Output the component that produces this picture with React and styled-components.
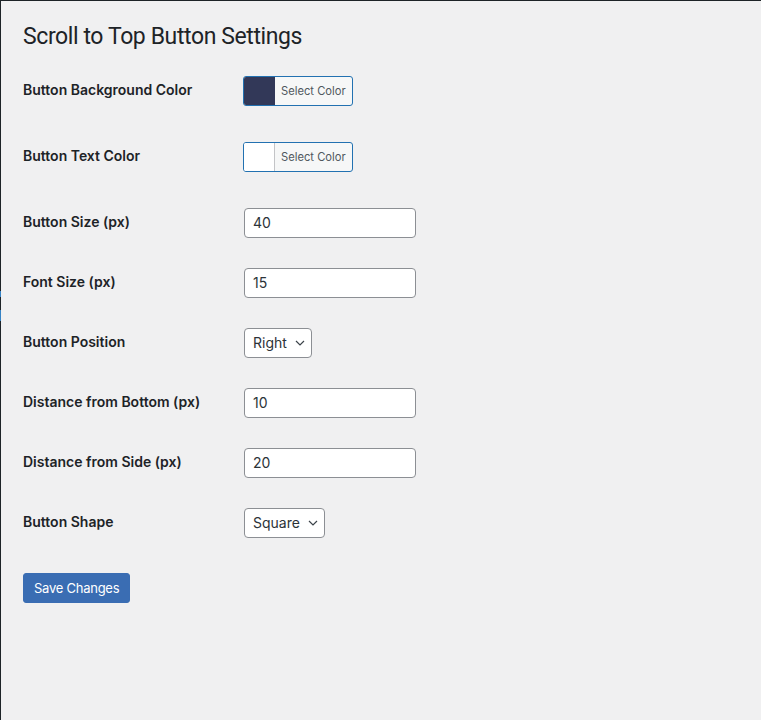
import styled, { createGlobalStyle } from "styled-components";

const GlobalStyle = createGlobalStyle`
  html, body {
    margin: 0;
    padding: 0;
    background: #f0f0f1;
  }
  body {
    font-family: Inter, "Noto Sans", "Liberation Sans", sans-serif;
    color: #1d2327;
  }
`

const Page = styled.div`
  display: flex;
  min-height: 720px;
  border-top: 1px solid #1d2327;
  box-sizing: border-box;
  background: #f0f0f1;
`

const EdgeStrip = styled.div`
  width: 1px;
  flex-shrink: 0;
  background: linear-gradient(
    to bottom,
    #1d2327 0px,
    #1d2327 290px,
    #3582c4 290px,
    #3582c4 296px,
    #1d2327 296px,
    #1d2327 309px,
    #3582c4 309px,
    #3582c4 320px,
    #1d2327 320px
  );
`

const Wrap = styled.div`
  flex: 1;
  padding: 0 20px 0 22px;
`

const Title = styled.h1`
  font-family: Roboto, Inter, sans-serif;
  font-size: 23px;
  font-weight: 400;
  line-height: 1.3;
  letter-spacing: -0.4px;
  margin: 0;
  padding: 21px 0 9px;
  color: #1d2327;
`

const FormTable = styled.div`
  display: flex;
  flex-direction: column;
`

const Row = styled.div`
  display: grid;
  grid-template-columns: 210px 1fr;
  height: ${props => props.tall ? 66 : 60}px;
`

const Label = styled.div`
  font-size: 14px;
  font-weight: 600;
  line-height: 1.3;
  padding-top: 20px;
  color: #1d2327;
`

const Field = styled.div`
  padding: 15px 10px;
  display: flex;
  align-items: flex-start;
`

const ColorResult = styled.button`
  display: flex;
  align-items: stretch;
  height: 30px;
  padding: 0;
  margin: 0;
  border: 1px solid #2271b1;
  border-radius: 3px;
  background: #f6f7f7;
  overflow: hidden;
  cursor: pointer;
  box-sizing: border-box;
`

const Swatch = styled.span`
  width: 30px;
  background: ${props => props.color};
  border-right: 1px solid ${props => props.color === "#ffffff" ? "#c3c4c7" : props.color};
`

const ColorText = styled.span`
  display: flex;
  align-items: center;
  padding: 0 6px;
  font-size: 11.2px;
  color: #50575e;
  font-family: Inter, sans-serif;
`

const TextInput = styled.input`
  width: 172px;
  height: 30px;
  margin: 0 1px;
  padding: 0 8px;
  box-sizing: border-box;
  border: 1px solid #8c8f94;
  border-radius: 4px;
  background: #fff;
  font-family: inherit;
  font-size: 14px;
  color: #2c3338;
  outline: none;
`

const SelectWrap = styled.div`
  position: relative;
  display: inline-flex;
  margin: 0 1px;

  & svg {
    position: absolute;
    right: 7px;
    top: 10px;
    pointer-events: none;
  }
`

const Select = styled.select`
  appearance: none;
  height: 30px;
  padding: 0 24px 0 8px;
  border: 1px solid #8c8f94;
  border-radius: 4px;
  background: #fff;
  font-family: inherit;
  font-size: 14px;
  color: #2c3338;
  outline: none;
`

const Submit = styled.div`
  padding-top: 20px;
`

const PrimaryButton = styled.button`
  height: 30px;
  padding: 0 10px;
  border: 1px solid #3a6db3;
  border-radius: 3px;
  background: #3a6db3;
  color: #fff;
  font-family: inherit;
  font-size: 13px;
  letter-spacing: -0.25px;
  cursor: pointer;
`

const Chevron = () => (
  <svg width="10" height="10" viewBox="0 0 10 10">
    <polyline points="1,3 5,7 9,3" fill="none" stroke="#3c434a" strokeWidth="1.2" />
  </svg>
)

const ColorPicker = ({ color }) => (
  <ColorResult type="button">
    <Swatch color={color} />
    <ColorText>Select Color</ColorText>
  </ColorResult>
)

const SelectField = ({ value, options }) => (
  <SelectWrap>
    <Select defaultValue={value}>
      {options.map(o => <option key={o}>{o}</option>)}
    </Select>
    <Chevron />
  </SelectWrap>
)

const App = () => {
  return (
    <Page>
      <GlobalStyle />
      <EdgeStrip />
      <Wrap>
        <Title>Scroll to Top Button Settings</Title>
        <FormTable>
          <Row tall>
            <Label>Button Background Color</Label>
            <Field><ColorPicker color="#323858" /></Field>
          </Row>
          <Row tall>
            <Label>Button Text Color</Label>
            <Field><ColorPicker color="#ffffff" /></Field>
          </Row>
          <Row>
            <Label>Button Size (px)</Label>
            <Field><TextInput type="number" defaultValue="40" /></Field>
          </Row>
          <Row>
            <Label>Font Size (px)</Label>
            <Field><TextInput type="number" defaultValue="15" /></Field>
          </Row>
          <Row>
            <Label>Button Position</Label>
            <Field><SelectField value="Right" options={["Right", "Left"]} /></Field>
          </Row>
          <Row>
            <Label>Distance from Bottom (px)</Label>
            <Field><TextInput type="number" defaultValue="10" /></Field>
          </Row>
          <Row>
            <Label>Distance from Side (px)</Label>
            <Field><TextInput type="number" defaultValue="20" /></Field>
          </Row>
          <Row>
            <Label>Button Shape</Label>
            <Field><SelectField value="Square" options={["Square", "Round"]} /></Field>
          </Row>
        </FormTable>
        <Submit>
          <PrimaryButton type="button">Save Changes</PrimaryButton>
        </Submit>
      </Wrap>
    </Page>
  )
}

export default App;
